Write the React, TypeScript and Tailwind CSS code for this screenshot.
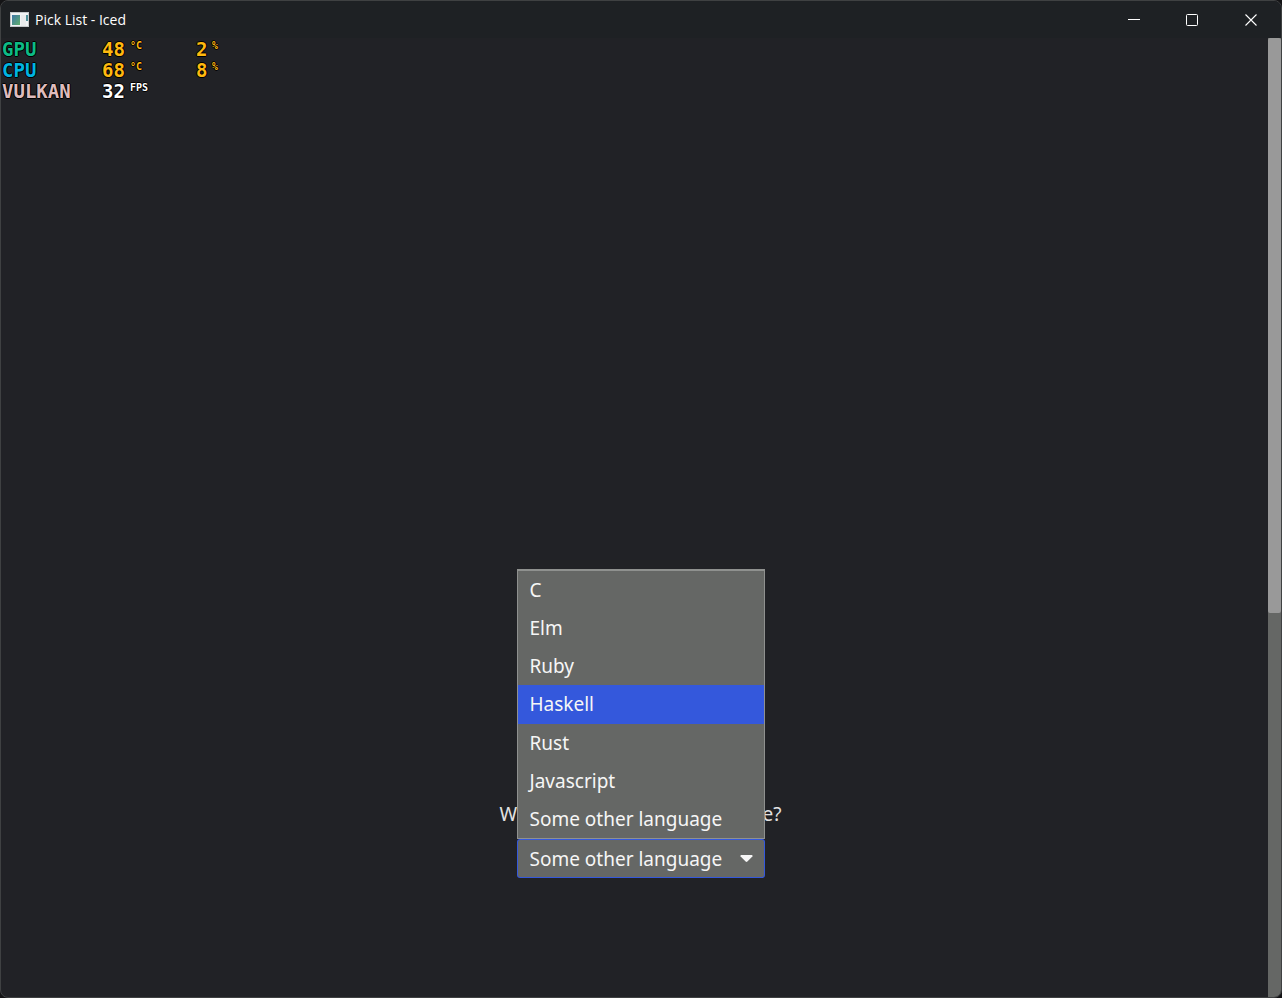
import React, { useState } from "react";

const LANGUAGES = ["C", "Elm", "Ruby", "Haskell", "Rust", "Javascript", "Some other language"];

type Reading = { value: string; unit: string; color: string };
type StatRow = { name: string; nameColor: string; readings: Reading[] };

const STATS: StatRow[] = [
  {
    name: "GPU",
    nameColor: "text-[#0dbb86]",
    readings: [
      { value: "48", unit: "°C", color: "text-[#ffb90f]" },
      { value: "2", unit: "%", color: "text-[#ffb90f]" },
    ],
  },
  {
    name: "CPU",
    nameColor: "text-[#00b4e0]",
    readings: [
      { value: "68", unit: "°C", color: "text-[#ffb90f]" },
      { value: "8", unit: "%", color: "text-[#ffb90f]" },
    ],
  },
  {
    name: "VULKAN",
    nameColor: "text-[#dfbcbc]",
    readings: [{ value: "32", unit: "FPS", color: "text-white" }],
  },
];

function AppIcon() {
  return (
    <svg width="19" height="16" viewBox="0 0 19 16" aria-hidden="true">
      <defs>
        <linearGradient id="pane" x1="0" y1="0" x2="1" y2="1">
          <stop offset="0" stopColor="#3f78a8" />
          <stop offset="1" stopColor="#5fae6c" />
        </linearGradient>
      </defs>
      <rect x="0.5" y="0.5" width="18" height="14" fill="#f1f3f4" stroke="#c4c8ca" />
      <rect x="2" y="3" width="8" height="10" fill="url(#pane)" />
      <rect x="11" y="3" width="5" height="11" fill="#e9ebec" />
      <rect x="16" y="3" width="2" height="6" fill="#4d8f98" />
    </svg>
  );
}

function TitleBar() {
  return (
    <header className="flex h-[37px] shrink-0 items-center bg-[#1e2124] pl-[9px]">
      <AppIcon />
      <h1 className="ml-[6px] flex-1 font-['Open_Sans','Noto_Sans',sans-serif] text-[14px] leading-5 text-white">
        Pick List - Iced
      </h1>
      <button aria-label="Minimize" className="flex h-full w-[58px] items-center justify-center">
        <svg width="12" height="12" viewBox="0 0 12 12" stroke="#fff" fill="none">
          <path d="M0 5.5H12" />
        </svg>
      </button>
      <button aria-label="Maximize" className="flex h-full w-[58px] items-center justify-center">
        <svg width="12" height="12" viewBox="0 0 12 12" stroke="#fff" fill="none">
          <rect x="0.5" y="0.5" width="11" height="11" rx="1" />
        </svg>
      </button>
      <button aria-label="Close" className="flex h-full w-[60px] items-center justify-center">
        <svg width="12" height="12" viewBox="0 0 12 12" stroke="#fff" fill="none" strokeWidth="1.1">
          <path d="M0.5 0.5L11.5 11.5M11.5 0.5L0.5 11.5" />
        </svg>
      </button>
    </header>
  );
}

function StatsOverlay() {
  return (
    <table className="absolute top-px left-px border-collapse font-['DejaVu_Sans_Mono','Liberation_Mono',monospace] text-[19px] leading-[21px] font-bold [text-shadow:1px_0_#000,-1px_0_#000,0_1px_#000,0_-1px_#000]">
      <tbody>
        {STATS.map((row) => (
          <tr key={row.name}>
            <th scope="row" className={`w-[100px] p-0 text-left ${row.nameColor}`}>
              {row.name}
            </th>
            {row.readings.map((r, i) => (
              <td key={i} className="p-0">
                <div className={`flex w-[70px] ${r.color}`}>
                  <span className={i === 0 ? "w-7" : "ml-6 w-4"}>{r.value}</span>
                  <span className="text-[10px] leading-[14px]">{r.unit}</span>
                </div>
              </td>
            ))}
          </tr>
        ))}
      </tbody>
    </table>
  );
}

function PickList() {
  const [selected, setSelected] = useState("Some other language");
  const [hovered, setHovered] = useState("Haskell");
  return (
    <div className="relative w-[248px]">
      <div className="rounded-[3px] bg-[#3458dc] p-px">
        <select
          id="language"
          value={selected}
          onChange={(e) => setSelected(e.target.value)}
          className="block h-[37px] w-full appearance-none rounded-[2px] bg-[#656765] pl-3 text-[19px] leading-6 text-[#f6f6f6] outline-none"
        >
          {LANGUAGES.map((l) => (
            <option key={l}>{l}</option>
          ))}
        </select>
      </div>
      <svg
        className="pointer-events-none absolute top-4 right-3"
        width="13"
        height="8"
        viewBox="0 0 13 8"
        fill="#f6f6f6"
        aria-hidden="true"
      >
        <path d="M1 0H12Q13 0.6 12.4 1.4L7.4 6.6Q6.5 7.4 5.6 6.6L0.6 1.4Q0 0.6 1 0Z" />
      </svg>
      <ul
        role="listbox"
        aria-label="Languages"
        className="absolute bottom-full left-0 grid h-[270px] w-full auto-rows-fr border border-t-2 border-[#8f918f] bg-[#656765] text-[19px] leading-6 text-[#f6f6f6]"
      >
        {LANGUAGES.map((l) => (
          <li
            key={l}
            role="option"
            aria-selected={l === selected}
            onMouseEnter={() => setHovered(l)}
            onClick={() => setSelected(l)}
            className={`flex items-center pl-3 ${l === hovered ? "bg-[#3458dc]" : ""}`}
          >
            {l}
          </li>
        ))}
      </ul>
    </div>
  );
}

export default function App() {
  return (
    <div className="h-screen bg-[#141416]">
      <div className="flex h-full flex-col overflow-hidden rounded-lg border border-[#3f4142] bg-[#212226]">
        <TitleBar />
        <div className="relative flex min-h-0 flex-1">
          <StatsOverlay />
          <main className="flex flex-1 flex-col items-center justify-end pb-[119px] pl-3 font-['Noto_Sans','Open_Sans',sans-serif]">
            <label htmlFor="language" className="mb-[13px] text-[19px] leading-6 whitespace-nowrap text-[#e2e2e2]">
              What is your favorite language?
            </label>
            <PickList />
          </main>
          <div className="flex w-[13px] flex-col bg-[#656765]">
            <div className="h-3/5 rounded-[2px] bg-[#999]" />
          </div>
        </div>
      </div>
    </div>
  );
}
